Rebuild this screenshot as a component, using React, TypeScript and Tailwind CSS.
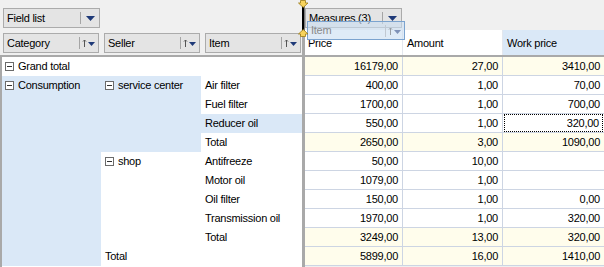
import clsx from 'clsx';

const ROW = 'leading-[19px]';

function SortIcons({ faded }: { faded?: boolean }) {
  return (
    <svg width="14" height="8" viewBox="0 0 14 8" className={faded ? 'opacity-50' : ''}>
      <path d="M2.5 1v7M1 2.5l1.5-1.5 1.5 1.5" stroke="#555" strokeWidth="1" fill="none" />
      <path d="M6 3h7l-3.5 4z" fill="#1f3a78" />
    </svg>
  );
}

function DropIcon() {
  return (
    <svg width="9" height="5" viewBox="0 0 9 5">
      <path d="M0 0h9l-4.5 5z" fill="#1f3a78" />
    </svg>
  );
}

function FieldButton({
  label,
  sort,
  className,
}: {
  label: string;
  sort?: boolean;
  className?: string;
}) {
  return (
    <div className={clsx('flex h-[20px] items-stretch border border-[#ababab] bg-[#e4e4e4]', className)}>
      <span className="flex-1 truncate pl-[3px] leading-[18px]">{label}</span>
      <span className="my-[3px] w-px bg-[#a5a5a5]" />
      <span className="flex w-[18px] items-center justify-center">
        {sort ? <SortIcons /> : <DropIcon />}
      </span>
    </div>
  );
}

function Toggle() {
  return (
    <span className="relative mr-[4px] inline-block h-[9px] w-[9px] border border-[#6b6b6b] bg-white align-[-1px]">
      <span className="absolute left-[1px] top-[3px] h-px w-[5px] bg-[#333]" />
    </span>
  );
}

type Row = { price: string; amount: string; work: string; total?: boolean; focus?: boolean };

const rows: Row[] = [
  { price: '16179,00', amount: '27,00', work: '3410,00', total: true },
  { price: '400,00', amount: '1,00', work: '70,00' },
  { price: '1700,00', amount: '1,00', work: '700,00' },
  { price: '550,00', amount: '1,00', work: '320,00', focus: true },
  { price: '2650,00', amount: '3,00', work: '1090,00', total: true },
  { price: '50,00', amount: '10,00', work: '' },
  { price: '1079,00', amount: '1,00', work: '' },
  { price: '150,00', amount: '1,00', work: '0,00' },
  { price: '1970,00', amount: '1,00', work: '320,00' },
  { price: '3249,00', amount: '13,00', work: '320,00', total: true },
  { price: '5899,00', amount: '16,00', work: '1410,00', total: true },
];

export default function App() {
  return (
    <div
      className="relative flex h-[267px] w-[604px] flex-col overflow-hidden bg-[#f0f0f0] text-[11px] tracking-[-0.25px] text-black"
      style={{ fontFamily: 'Tahoma, "Liberation Sans", Arial, sans-serif' }}
    >
      {/* top bar */}
      <div className="flex h-[30px] shrink-0">
        <div className="w-[305px] pl-[3px] pt-[8px]">
          <FieldButton label="Field list" className="w-[97px]" />
        </div>
        <div className="pt-[8px]">
          <FieldButton label="Measures (3)" className="w-[97px]" />
        </div>
      </div>

      {/* field headers */}
      <div className="flex h-[25px] shrink-0">
        <div className="flex w-[302px] gap-[5px] pl-[3px] pt-[3px]">
          <FieldButton label="Category" sort className="w-[96px]" />
          <FieldButton label="Seller" sort className="w-[96px]" />
          <FieldButton label="Item" sort className="w-[96px]" />
        </div>
        <div className="w-[3px] bg-[#a9a9a9]" />
        <div className="flex">
          <div className="w-[98px] border-r border-[#e3e7ee] bg-white pl-[3px] pt-[5px]">Price</div>
          <div className="w-[100px] border-r border-[#e3e7ee] bg-white pl-[4px] pt-[5px]">Amount</div>
          <div className="w-[101px] bg-[#dae8f7] pl-[4px] pt-[5px]">Work price</div>
        </div>
      </div>

      <div className="h-[2px] shrink-0 bg-[#a9a9a9]" />

      {/* body */}
      <div className="flex flex-1">
        <div className="grid w-[302px] grid-cols-[99px_100px_101px] grid-rows-[repeat(11,19px)] border-l-2 border-[#a9a9a9] bg-white">
          <div className={clsx('col-span-3 pl-[3px]', ROW)}>
            <Toggle />Grand total
          </div>
          <div className={clsx('row-span-10 bg-[#dae8f7] pl-[3px]', ROW)}>
            <Toggle />Consumption
          </div>
          <div className={clsx('row-span-4 bg-[#dae8f7] pl-[4px]', ROW)}>
            <Toggle />service center
          </div>
          <div className={clsx('pl-[4px]', ROW)}>Air filter</div>
          <div className={clsx('pl-[4px]', ROW)}>Fuel filter</div>
          <div className={clsx('bg-[#dae8f7] pl-[4px]', ROW)}>Reducer oil</div>
          <div className={clsx('pl-[4px]', ROW)}>Total</div>
          <div className={clsx('row-span-5 pl-[4px]', ROW)}>
            <Toggle />shop
          </div>
          <div className={clsx('pl-[4px]', ROW)}>Antifreeze</div>
          <div className={clsx('pl-[4px]', ROW)}>Motor oil</div>
          <div className={clsx('pl-[4px]', ROW)}>Oil filter</div>
          <div className={clsx('pl-[4px]', ROW)}>Transmission oil</div>
          <div className={clsx('pl-[4px]', ROW)}>Total</div>
          <div className={clsx('col-span-2 pl-[4px]', ROW)}>Total</div>
        </div>

        <div className="w-[3px] bg-[#a9a9a9]" />

        <div className="flex flex-col">
          {rows.map((r, i) => (
            <div key={i} className={clsx('flex', r.total ? 'bg-[#fffdec]' : 'bg-white')}>
              <div className="h-[19px] w-[98px] border-b border-r border-[#cdd5e3] pr-[4px] text-right leading-[18px]">
                {r.price}
              </div>
              <div className="h-[19px] w-[100px] border-b border-r border-[#cdd5e3] pr-[4px] text-right leading-[18px]">
                {r.amount}
              </div>
              <div className="h-[19px] w-[101px] border-b border-[#cdd5e3]">
                <div
                  className={clsx(
                    'h-full text-right',
                    r.focus ? 'mx-[1px] border border-dotted border-black pr-[3px] leading-[17px]' : 'pr-[4px] leading-[18px]',
                  )}
                >
                  {r.work}
                </div>
              </div>
            </div>
          ))}
        </div>
      </div>

      {/* drag ghost */}
      <div className="absolute left-[307px] top-[21px] flex h-[19px] w-[98px] items-center border border-[#7ba3cf] bg-[#c9ddf2]/60 text-[#8a8a8a]">
        <span className="flex-1 pl-[3px]">Item</span>
        <span className="my-[3px] h-[12px] w-px bg-[#c0c8d2]" />
        <span className="flex w-[18px] justify-center">
          <SortIcons faded />
        </span>
      </div>

      {/* drop indicator */}
      <svg className="absolute left-[297px] top-0" width="13" height="38" viewBox="0 0 13 38">
        <rect x="5" y="4" width="2.5" height="28" fill="#000" />
        <path d="M3.5 0.5h5v2.5h2.5l-4.75 4.5-4.75-4.5h2z" fill="#f7d35c" stroke="#9b7a14" strokeWidth="0.8" />
        <path d="M3.5 36.5h5v-2.5h2.5l-4.75-4.5-4.75 4.5h2z" fill="#f7d35c" stroke="#9b7a14" strokeWidth="0.8" />
      </svg>
    </div>
  );
}
